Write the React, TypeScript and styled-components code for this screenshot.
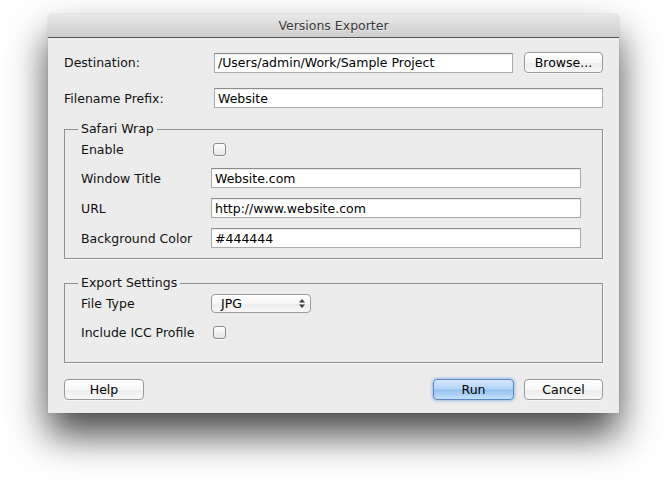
import React from "react";
import styled, { createGlobalStyle, css } from "styled-components";

const Global = createGlobalStyle`
  html, body { margin: 0; padding: 0; background: #ffffff; }
  html, body, #root { min-height: 100vh; }
  body { font-family: "DejaVu Sans", "Liberation Sans", sans-serif; font-size: 12.5px; color: #000; }
  #root { display: flow-root; }
`;

const Window = styled.div`
  width: 571px;
  margin: 14px 0 0 48px;
  border-radius: 5px 5px 0 0;
  background: #ececec;
  box-shadow: 0 22px 38px rgba(0, 0, 0, 0.72), 0 0 1px rgba(0, 0, 0, 0.35);
`;

const TitleBar = styled.div`
  height: 24px;
  box-sizing: border-box;
  border-bottom: 1px solid #565656;
  border-radius: 5px 5px 0 0;
  background: linear-gradient(#e9e9e9, #cdcdcd);
  color: #3a3a3a;
  font-size: 12.5px;
  line-height: 23px;
  text-align: center;
  text-shadow: 0 1px 0 rgba(255, 255, 255, 0.5);
`;

const Body = styled.div`
  display: flex;
  flex-direction: column;
  padding: 14px 16px 13px;
`;

const TopGrid = styled.div`
  display: grid;
  grid-template-columns: 139px 299px 79px;
  column-gap: 11px;
  row-gap: 15px;
  align-items: center;
`;

const Label = styled.div`
  color: #111;
  white-space: nowrap;
`;

const Field = styled.input<{ $span?: boolean }>`
  height: 20px;
  box-sizing: border-box;
  width: 100%;
  margin: 0;
  border: 1px solid #ababab;
  border-top-color: #8c8c8c;
  background: #fff;
  box-shadow: inset 0 1px 1px rgba(0, 0, 0, 0.08);
  padding: 0 3px;
  font-family: "DejaVu Sans", "Liberation Sans", sans-serif;
  font-size: 12.5px;
  color: #000;
  outline: none;
  ${(p) => p.$span && css`grid-column: span 2;`}
`;

const Button = styled.button<{ $w: number; $primary?: boolean }>`
  width: ${(p) => p.$w}px;
  height: 21px;
  box-sizing: border-box;
  margin: 0;
  padding: 0;
  border: 1px solid #9a9a9a;
  border-radius: 4px;
  background: linear-gradient(#ffffff 0%, #f7f7f7 50%, #ececec 52%, #f8f8f8 100%);
  box-shadow: 0 1px 0 rgba(255, 255, 255, 0.6);
  font-family: "DejaVu Sans", "Liberation Sans", sans-serif;
  font-size: 12.5px;
  color: #000;
  ${(p) =>
    p.$primary &&
    css`
      border-color: #5b87c2;
      background: linear-gradient(#d6e8fb 0%, #b3d3f6 48%, #93c0f0 52%, #c6e1fb 100%);
      box-shadow: 0 0 3px 1px rgba(90, 150, 230, 0.55);
    `}
`;

const Group = styled.fieldset`
  margin: 0;
  padding: 0 21px 0 16px;
  min-width: 0;
  border: 1px solid #8f8f8f;
  box-shadow: 1px 1px 0 #fafafa;
`;

const Legend = styled.legend`
  padding: 0 3px;
  margin-left: -3px;
  line-height: 16px;
  color: #111;
`;

const GroupGrid = styled.div<{ $rows: string; $pb: number }>`
  display: grid;
  grid-template-columns: 130px 1fr;
  grid-template-rows: ${(p) => p.$rows};
  row-gap: 10px;
  align-items: center;
  padding: 3px 0 ${(p) => p.$pb}px;
`;

const Check = styled.span`
  display: block;
  width: 13px;
  height: 13px;
  margin-left: 2px;
  box-sizing: border-box;
  border: 1px solid #8a8a8a;
  border-radius: 3px;
  background: linear-gradient(#fdfdfd, #e6e6e6);
  box-shadow: 0 1px 0 rgba(255, 255, 255, 0.7);
`;

const Select = styled.div`
  width: 100px;
  height: 19px;
  box-sizing: border-box;
  display: flex;
  align-items: center;
  justify-content: space-between;
  padding: 0 5px 0 9px;
  border: 1px solid #9a9a9a;
  border-radius: 4px;
  background: linear-gradient(#ffffff 0%, #f7f7f7 50%, #ececec 52%, #f8f8f8 100%);
  color: #000;
`;

const Stepper = () => (
  <svg width="6" height="9" viewBox="0 0 6 9">
    <path d="M3 0 L6 3.5 L0 3.5 Z" fill="#3a3a3a" />
    <path d="M0 5.5 L6 5.5 L3 9 Z" fill="#3a3a3a" />
  </svg>
);

const Stack = styled.div<{ $mt: number }>`
  margin-top: ${(p) => p.$mt}px;
`;

const ButtonRow = styled.div`
  display: flex;
  align-items: center;
  gap: 10px;
  margin-top: 16px;
`;

const Spacer = styled.div`
  flex: 1;
`;

export default function App() {
  return (
    <>
      <Global />
      <Window>
        <TitleBar>Versions Exporter</TitleBar>
        <Body>
          <TopGrid>
            <Label>Destination:</Label>
            <Field readOnly value="/Users/admin/Work/Sample Project" />
            <Button $w={79}>Browse...</Button>
            <Label>Filename Prefix:</Label>
            <Field $span readOnly value="Website" />
          </TopGrid>

          <Stack $mt={13}>
            <Group>
              <Legend>Safari Wrap</Legend>
              <GroupGrid $rows="18px 20px 20px 20px" $pb={10}>
                <Label>Enable</Label>
                <Check />
                <Label>Window Title</Label>
                <Field readOnly value="Website.com" />
                <Label>URL</Label>
                <Field readOnly value="http://www.website.com" />
                <Label>Background Color</Label>
                <Field readOnly value="#444444" />
              </GroupGrid>
            </Group>
          </Stack>

          <Stack $mt={16}>
            <Group>
              <Legend>Export Settings</Legend>
              <GroupGrid $rows="19px 18px" $pb={21}>
                <Label>File Type</Label>
                <Select>
                  <span>JPG</span>
                  <Stepper />
                </Select>
                <Label>Include ICC Profile</Label>
                <Check />
              </GroupGrid>
            </Group>
          </Stack>

          <ButtonRow>
            <Button $w={80}>Help</Button>
            <Spacer />
            <Button $w={81} $primary>
              Run
            </Button>
            <Button $w={79}>Cancel</Button>
          </ButtonRow>
        </Body>
      </Window>
    </>
  );
}
